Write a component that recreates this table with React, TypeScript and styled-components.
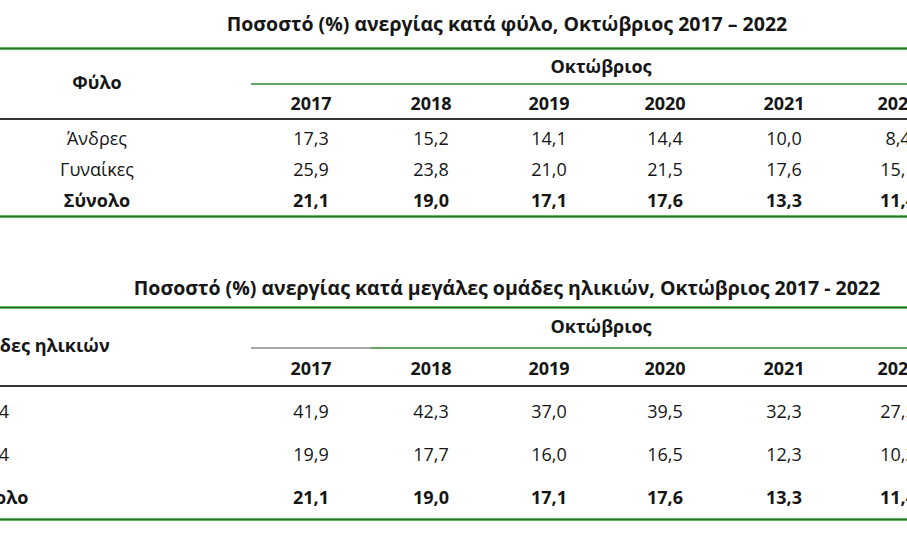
import React from 'react'
import styled, { createGlobalStyle } from 'styled-components'

type Row = { label: string; values: string[]; total?: boolean }

type TableSpec = {
  title: string
  corner: string
  align: 'center' | 'left'
  titleTop: number
  titleGap: number
  groupHeight: number
  groupPad: number
  yearPad: string
  cornerPad: number
  rowHeight: number
  mutedFirst?: boolean
  rows: Row[]
}

const years = ['2017', '2018', '2019', '2020', '2021', '2022']

const tables: TableSpec[] = [
  {
    title: 'Ποσοστό (%) ανεργίας κατά φύλο, Οκτώβριος 2017 – 2022',
    corner: 'Φύλο',
    align: 'center',
    titleTop: 12,
    titleGap: 11,
    groupHeight: 33,
    groupPad: 4,
    yearPad: '6px 0 3px',
    cornerPad: 20,
    rowHeight: 31,
    rows: [
      { label: 'Άνδρες', values: ['17,3', '15,2', '14,1', '14,4', '10,0', '8,4'] },
      { label: 'Γυναίκες', values: ['25,9', '23,8', '21,0', '21,5', '17,6', '15,1'] },
      { label: 'Σύνολο', values: ['21,1', '19,0', '17,1', '17,6', '13,3', '11,4'], total: true },
    ],
  },
  {
    title: 'Ποσοστό (%) ανεργίας κατά μεγάλες ομάδες ηλικιών, Οκτώβριος 2017 - 2022',
    corner: 'Ομάδες ηλικιών',
    align: 'left',
    titleTop: 58,
    titleGap: 6,
    groupHeight: 38,
    groupPad: 5,
    yearPad: '7px 0 5px',
    cornerPad: 24,
    rowHeight: 43,
    mutedFirst: true,
    rows: [
      { label: '15-24', values: ['41,9', '42,3', '37,0', '39,5', '32,3', '27,5'] },
      { label: '25-74', values: ['19,9', '17,7', '16,0', '16,5', '12,3', '10,2'] },
      { label: 'Σύνολο', values: ['21,1', '19,0', '17,1', '17,6', '13,3', '11,4'], total: true },
    ],
  },
]

export default function App() {
  return (
    <>
      <GlobalStyle />
      <Page>
        {tables.map((t) => (
          <Section key={t.title}>
            <Title $top={t.titleTop} $gap={t.titleGap}>
              {t.title}
            </Title>
            <Table>
              <Rule />
              <Corner $align={t.align} $pad={t.cornerPad}>
                {t.corner}
              </Corner>
              <Group $height={t.groupHeight} $pad={t.groupPad}>
                Οκτώβριος
              </Group>
              {years.map((y, i) => (
                <Year key={y} $pad={t.yearPad} $muted={!!t.mutedFirst && i === 0}>
                  {y}
                </Year>
              ))}
              {t.rows.map((r) => (
                <React.Fragment key={r.label}>
                  <Label $align={t.align} $height={t.rowHeight} $bold={r.total}>
                    {r.label}
                  </Label>
                  {r.values.map((v, i) => (
                    <Value key={i} $height={t.rowHeight} $bold={r.total}>
                      {v}
                    </Value>
                  ))}
                </React.Fragment>
              ))}
              <Rule />
            </Table>
          </Section>
        ))}
      </Page>
    </>
  )
}

/*---> Styles <---*/
const GlobalStyle = createGlobalStyle`
  html, body {
    margin: 0;
    padding: 0;
    background: #fff;
    overflow: hidden;
  }
  body {
    font-family: 'Open Sans', 'Noto Sans', 'DejaVu Sans', sans-serif;
    color: #161616;
  }
`

const Page = styled.div`
  width: 907px;
  height: 536px;
  overflow: hidden;
`

const Section = styled.section`
  display: flex;
  flex-direction: column;
`

const Title = styled.div<{ $top: number; $gap: number }>`
  margin-top: ${(p) => p.$top}px;
  margin-bottom: ${(p) => p.$gap}px;
  padding-left: 107px;
  text-align: center;
  font-size: 19.5px;
  line-height: 24px;
  font-weight: 700;
  white-space: nowrap;
`

const Table = styled.div`
  display: grid;
  grid-template-columns: 308px 120px 120px 116px 116px 122px 106px;
  margin-left: -57px;
  font-size: 18px;
  line-height: 24px;
`

const Rule = styled.div`
  grid-column: 1 / -1;
  height: 3px;
  background: linear-gradient(#5fb85f 0 1px, #2a6a2a 1px 2px, #5fb85f 2px 3px);
`

const Corner = styled.div<{ $align: 'center' | 'left'; $pad: number }>`
  grid-row: span 2;
  padding-top: ${(p) => p.$pad}px;
  padding-left: ${(p) => (p.$align === 'left' ? '19px' : '0')};
  text-align: ${(p) => p.$align};
  font-weight: 700;
  white-space: nowrap;
  border-bottom: 2px solid #333;
  margin-bottom: 2px;
`

const Group = styled.div<{ $height: number; $pad: number }>`
  grid-column: 2 / -1;
  box-sizing: border-box;
  height: ${(p) => p.$height}px;
  padding-top: ${(p) => p.$pad}px;
  text-align: center;
  font-weight: 700;
`

const Year = styled.div<{ $pad: string; $muted: boolean }>`
  padding: ${(p) => p.$pad};
  text-align: center;
  font-weight: 700;
  white-space: nowrap;
  border-top: 2px solid ${(p) => (p.$muted ? '#a8a8a8' : '#66a366')};
  border-bottom: 2px solid #333;
  margin-bottom: 2px;
`

const Label = styled.div<{ $align: 'center' | 'left'; $height: number; $bold?: boolean }>`
  display: flex;
  align-items: center;
  justify-content: ${(p) => (p.$align === 'left' ? 'flex-start' : 'center')};
  height: ${(p) => p.$height}px;
  padding-left: ${(p) => (p.$align === 'left' ? '19px' : '0')};
  font-weight: ${(p) => (p.$bold ? 700 : 400)};
  white-space: nowrap;
`

const Value = styled.div<{ $height: number; $bold?: boolean }>`
  display: flex;
  align-items: center;
  justify-content: center;
  height: ${(p) => p.$height}px;
  font-weight: ${(p) => (p.$bold ? 700 : 400)};
  white-space: nowrap;
`
